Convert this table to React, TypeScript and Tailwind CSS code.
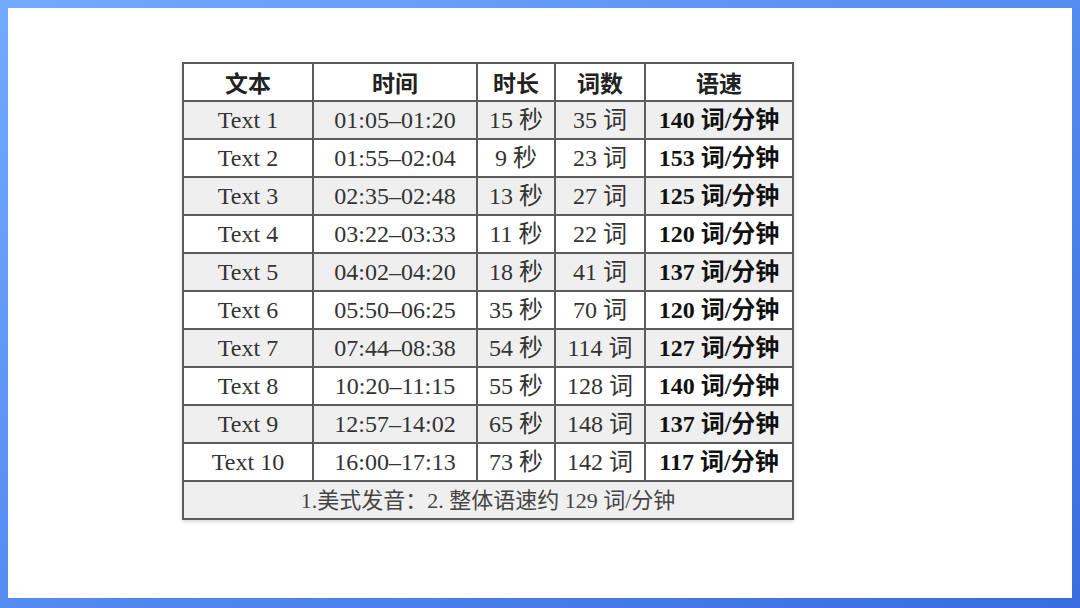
import React from "react";

const rows = [
  ["Text 1", "01:05–01:20", "15", "35", "140"],
  ["Text 2", "01:55–02:04", "9", "23", "153"],
  ["Text 3", "02:35–02:48", "13", "27", "125"],
  ["Text 4", "03:22–03:33", "11", "22", "120"],
  ["Text 5", "04:02–04:20", "18", "41", "137"],
  ["Text 6", "05:50–06:25", "35", "70", "120"],
  ["Text 7", "07:44–08:38", "54", "114", "127"],
  ["Text 8", "10:20–11:15", "55", "128", "140"],
  ["Text 9", "12:57–14:02", "65", "148", "137"],
  ["Text 10", "16:00–17:13", "73", "142", "117"],
];

const font = { fontFamily: '"Liberation Serif", "Noto Sans CJK SC", serif' };

export default function App() {
  return (
    <div className="w-[1080px] h-[608px] flex flex-col pt-[8px] pl-[8px] pr-[8px] pb-[10px] bg-linear-to-br from-[#72aaff] to-[#396ce0]">
      <div className="flex-1 bg-white pl-[174px] pt-[54px]">
        <div
          className="grid w-[612px] grid-cols-[128px_162px_76px_88px_146px] grid-rows-[repeat(12,36px)] gap-[2px] bg-[#5c5c5c] p-[2px] shadow-[0_2px_3px_rgba(0,0,0,0.15)] text-[24px] text-[#333]"
          style={font}
        >
          {["文本", "时间", "时长", "词数", "语速"].map((h) => (
            <div
              key={h}
              className="bg-white flex items-center justify-center font-bold text-[#222] text-[23px] font-['Noto_Sans_CJK_SC',sans-serif]"
            >
              {h}
            </div>
          ))}
          {rows.map((r, i) => {
            const bg = i % 2 === 0 ? "bg-[#efefef]" : "bg-white";
            return (
              <React.Fragment key={r[0]}>
                <div className={`${bg} flex items-center justify-center`}>{r[0]}</div>
                <div className={`${bg} flex items-center justify-center`}>{r[1]}</div>
                <div className={`${bg} flex items-center justify-center`}>
                  {r[2]} 秒
                </div>
                <div className={`${bg} flex items-center justify-center`}>
                  {r[3]} 词
                </div>
                <div className={`${bg} flex items-center justify-center font-bold text-[#111]`}>
                  {r[4]} 词/分钟
                </div>
              </React.Fragment>
            );
          })}
          <div className="col-span-5 bg-[#efefef] flex items-center justify-center text-[22px] text-[#444]">
            1.美式发音：2. 整体语速约 129 词/分钟
          </div>
        </div>
      </div>
    </div>
  );
}
